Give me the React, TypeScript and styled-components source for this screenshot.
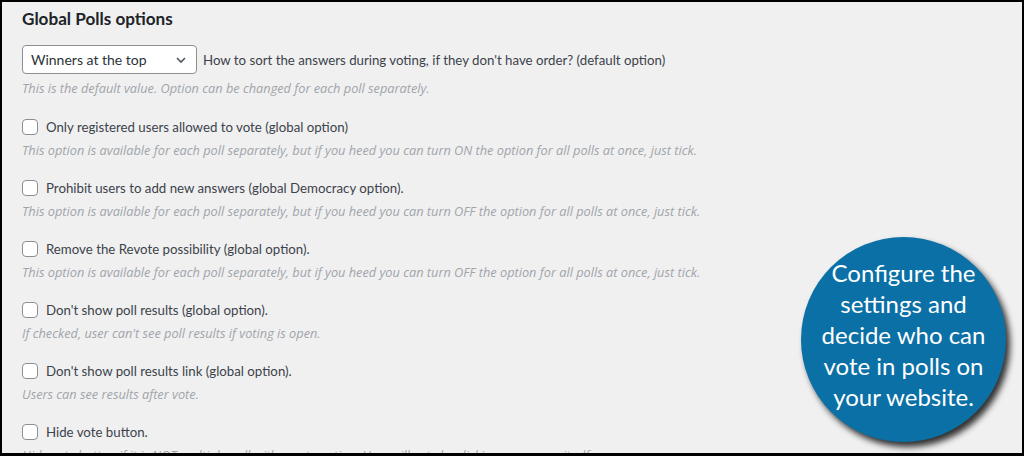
import React from "react";
import styled, { createGlobalStyle } from "styled-components";

const Global = createGlobalStyle`
  html, body { margin: 0; padding: 0; background: #000; }
  * { box-sizing: border-box; }
`;

const Frame = styled.div`
  position: relative;
  width: 1024px;
  height: 456px;
  border: 2px solid #000;
  border-bottom-width: 3px;
  background: #f0f0f1;
  overflow: hidden;
  font-family: "Lato", "Open Sans", sans-serif;
  color: #3c434a;
`;

const Content = styled.div`
  padding: 5px 0 0 20px;
  display: flex;
  flex-direction: column;
`;

const Heading = styled.h2`
  margin: 0;
  font-size: 17.1px;
  line-height: 24px;
  font-weight: 700;
  color: #1d2327;
`;

const SelectRow = styled.div`
  margin-top: 14px;
  display: flex;
  align-items: center;
  gap: 6px;
`;

const Select = styled.div`
  width: 175px;
  height: 29px;
  border: 1px solid #8c8f94;
  border-radius: 4px;
  background: #fff;
  display: flex;
  align-items: center;
  justify-content: space-between;
  padding: 0 7px 0 8px;
  font-size: 14px;
  color: #2c3338;
`;

const Label = styled.span`
  font-size: 13.25px;
  line-height: 20px;
  color: #3c434a;
`;

const Desc = styled.p<{ $top?: number }>`
  margin: ${(p) => p.$top ?? 3}px 0 0;
  font-family: "Open Sans", "Noto Sans", sans-serif;
  font-size: 12.75px;
  line-height: 20px;
  font-style: italic;
  color: #a0a5aa;
`;

const OptionList = styled.div`
  margin-top: 19px;
  display: flex;
  flex-direction: column;
  gap: 18px;
`;

const Option = styled.div`
  display: flex;
  flex-direction: column;
`;

const CheckRow = styled.label`
  display: flex;
  align-items: center;
  gap: 8px;
  height: 20px;
`;

const Box = styled.span`
  width: 16px;
  height: 16px;
  border: 1px solid #8c8f94;
  border-radius: 4px;
  background: #fff;
  flex: none;
`;

const Badge = styled.div`
  position: absolute;
  left: 799px;
  top: 235px;
  width: 205px;
  height: 205px;
  border-radius: 50%;
  background: #0b70a6;
  box-shadow: 4px 5px 6px rgba(0, 0, 0, 0.8);
  display: flex;
  align-items: center;
  justify-content: center;
  text-align: center;
  color: #fff;
  font-family: "Lato", "Open Sans", sans-serif;
  font-size: 24px;
  line-height: 31px;
  padding-bottom: 11px;
`;

const Chevron = () => (
  <svg width="16" height="16" viewBox="0 0 20 20">
    <path d="M5 7.5l5 5 5-5" fill="none" stroke="#50575e" strokeWidth="2" />
  </svg>
);

const options = [
  {
    label: "Only registered users allowed to vote (global option)",
    desc: "This option is available for each poll separately, but if you heed you can turn ON the option for all polls at once, just tick.",
  },
  {
    label: "Prohibit users to add new answers (global Democracy option).",
    desc: "This option is available for each poll separately, but if you heed you can turn OFF the option for all polls at once, just tick.",
  },
  {
    label: "Remove the Revote possibility (global option).",
    desc: "This option is available for each poll separately, but if you heed you can turn OFF the option for all polls at once, just tick.",
  },
  {
    label: "Don't show poll results (global option).",
    desc: "If checked, user can't see poll results if voting is open.",
  },
  {
    label: "Don't show poll results link (global option).",
    desc: "Users can see results after vote.",
  },
  {
    label: "Hide vote button.",
    desc: "Hide vote button if it is NOT multiple poll with revote option. User will vote by clicking on answer itself.",
  },
];

export default function App() {
  return (
    <>
      <Global />
      <Frame>
        <Content>
          <Heading>Global Polls options</Heading>
          <SelectRow>
            <Select>
              <span>Winners at the top</span>
              <Chevron />
            </Select>
            <Label>How to sort the answers during voting, if they don't have order? (default option)</Label>
          </SelectRow>
          <Desc $top={4}>This is the default value. Option can be changed for each poll separately.</Desc>
          <OptionList>
            {options.map((o) => (
              <Option key={o.label}>
                <CheckRow>
                  <Box />
                  <Label>{o.label}</Label>
                </CheckRow>
                <Desc>{o.desc}</Desc>
              </Option>
            ))}
          </OptionList>
        </Content>
        <Badge>
          <div>
            Configure the
            <br />
            settings and
            <br />
            decide who can
            <br />
            vote in polls on
            <br />
            your website.
          </div>
        </Badge>
      </Frame>
    </>
  );
}
